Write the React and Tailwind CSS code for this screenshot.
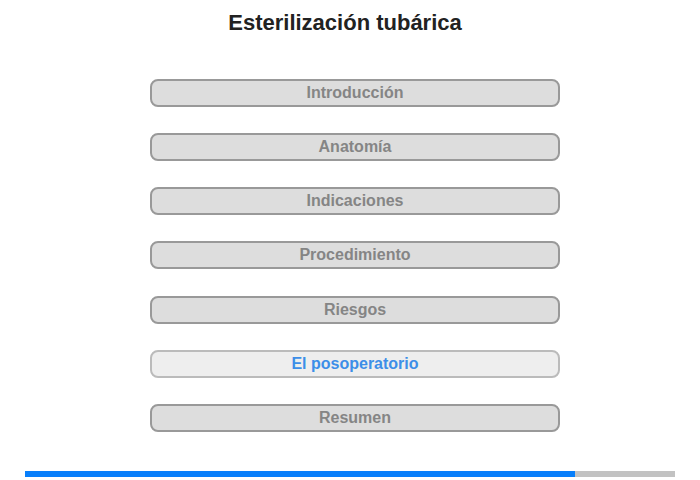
const items = [
  "Introducción",
  "Anatomía",
  "Indicaciones",
  "Procedimiento",
  "Riesgos",
  "El posoperatorio",
  "Resumen",
];

const ACTIVE = "El posoperatorio";

export default function App() {
  return (
    <div className="w-[700px] h-[480px] bg-white flex flex-col" style={{ fontFamily: '"Liberation Sans", Arial, sans-serif' }}>
      <h1 className="pt-[9px] pr-[10px] text-center text-[22px] leading-[28px] font-bold text-[#222222]">
        Esterilización tubárica
      </h1>

      <div className="mt-[42px] ml-[150px] w-[410px] flex flex-col gap-[26.17px]">
        {items.map((label) => {
          const active = label === ACTIVE;
          return (
            <button
              key={label}
              className={
                active
                  ? "h-[28px] w-full rounded-[8px] border-2 border-[#bbbbbb] bg-[#eeeeee] text-[16px] font-bold text-[#3d8ee8] flex items-center justify-center"
                  : "h-[28px] w-full rounded-[8px] border-2 border-[#999999] bg-[#dddddd] text-[16px] font-bold text-[#858585] flex items-center justify-center"
              }
            >
              {label}
            </button>
          );
        })}
      </div>

      <div className="mt-[39px] ml-[25px] w-[650px] h-[6px] bg-[#c2c2c2] flex">
        <div className="h-full bg-[#087ffb]" style={{ width: "550px" }} />
      </div>
    </div>
  );
}
